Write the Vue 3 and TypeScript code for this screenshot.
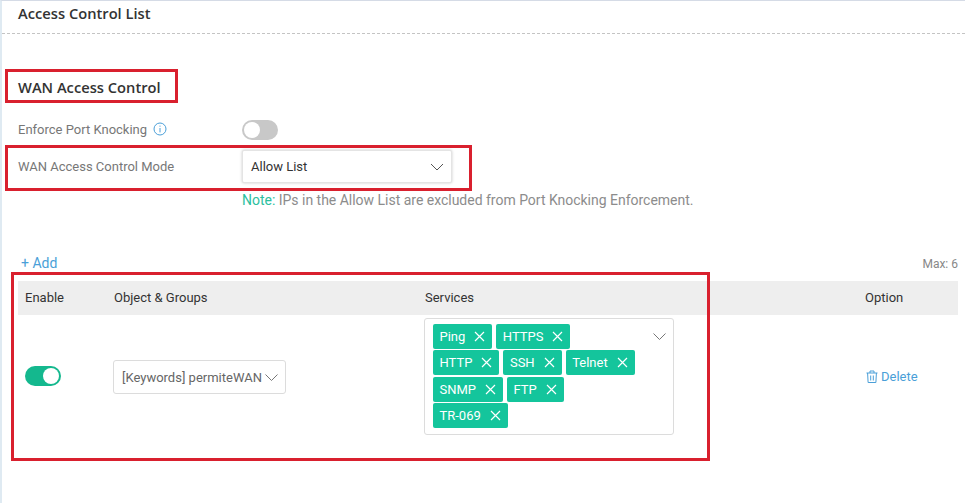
<script setup lang="ts">
interface Tag { name: string }
const rows: Tag[][] = [
  [{ name: 'Ping' }, { name: 'HTTPS' }],
  [{ name: 'HTTP' }, { name: 'SSH' }, { name: 'Telnet' }],
  [{ name: 'SNMP' }, { name: 'FTP' }],
  [{ name: 'TR-069' }],
]
</script>

<template>
  <div class="page">
    <header class="head"><h1>Access Control List</h1></header>
    <h2 class="section">WAN Access Control</h2>
    <div class="form-row first">
      <span class="label">Enforce Port Knocking
        <svg class="info" width="14" height="14" viewBox="0 0 14 14" fill="none" stroke="#4a9fd8">
          <circle cx="7" cy="7" r="6" />
          <path d="M7 6v4.4M7 3.6v1.1" />
        </svg>
      </span>
      <span class="switch off"><i></i></span>
    </div>
    <div class="form-row mode">
      <span class="label">WAN Access Control Mode</span>
      <div class="select">
        <span>Allow List</span>
        <svg width="14" height="8" viewBox="0 0 14 8" fill="none" stroke="#555"><path d="M1 1l6 6 6-6" /></svg>
      </div>
    </div>
    <p class="note"><b>Note:</b> IPs in the Allow List are excluded from Port Knocking Enforcement.</p>
    <div class="tools">
      <a class="add">+ Add</a>
      <span class="max">Max: 6</span>
    </div>
    <div class="table">
      <div class="tr th">
        <div class="c1">Enable</div>
        <div class="c2">Object &amp; Groups</div>
        <div class="c3">Services</div>
        <div class="c4">Option</div>
      </div>
      <div class="tr td">
        <div class="c1"><span class="switch on"><i></i></span></div>
        <div class="c2">
          <div class="obj">
            <span>[Keywords] permiteWAN</span>
            <svg width="13" height="7" viewBox="0 0 13 7" fill="none" stroke="#777"><path d="M.5.5l6 6 6-6" /></svg>
          </div>
        </div>
        <div class="c3">
          <div class="multi">
            <div class="tag-lines">
              <div v-for="(row, i) in rows" :key="i" class="tag-line">
                <span v-for="t in row" :key="t.name" class="tag">
                  {{ t.name }}
                  <svg width="11" height="11" viewBox="0 0 11 11" fill="none" stroke="#fff" stroke-width="1.2"><path d="M1 1l9 9M10 1l-9 9" /></svg>
                </span>
              </div>
            </div>
            <svg class="caret" width="13" height="7" viewBox="0 0 13 7" fill="none" stroke="#777"><path d="M.5.5l6 6 6-6" /></svg>
          </div>
        </div>
        <div class="c4">
          <a class="del">
            <svg width="12" height="13" viewBox="0 0 12 13" fill="none" stroke="#4a9fd8"><path d="M.5 3h11M4 3V1h4v2M1.6 3l.5 9.5h7.8L10.4 3M4.7 5.5v5M7.3 5.5v5" /></svg>
            Delete
          </a>
        </div>
      </div>
    </div>
    <div class="mark m1"></div>
    <div class="mark m2"></div>
    <div class="mark m3"></div>
  </div>
</template>

<style>
html, body { margin: 0; background: #fff; }
</style>

<style scoped>
.page {
  position: relative;
  width: 965px;
  height: 503px;
  box-sizing: border-box;
  padding-left: 16px;
  padding-right: 7px;
  border-top: 1px solid #d5dbe6;
  border-left: 2px solid #dfeaf2;
  background: #fff;
  font-family: Roboto, "Liberation Sans", sans-serif;
  font-size: 13px;
  overflow: hidden;
}
.head {
  height: 32px;
  margin: 0 -7px 0 -16px;
  padding-left: 16px;
  border-bottom: 1px dashed #c4c4c4;
}
h1, h2 {
  margin: 0;
  font-family: "Open Sans", sans-serif;
  font-weight: 600;
  color: #333;
}
h1 { font-size: 14.7px; line-height: 24px; }
.section { font-size: 14.7px; line-height: 20px; margin-top: 43px; }
.form-row { display: flex; align-items: center; }
.form-row.first { height: 24px; margin-top: 21px; }
.form-row.first .label { margin-bottom: 2px; }
.form-row.mode { height: 32px; margin-top: 8px; }
.label { width: 224px; color: #777; display: flex; align-items: center; gap: 6px; }
.info { flex: none; }
.switch {
  display: inline-block;
  box-sizing: border-box;
  width: 36px;
  height: 20px;
  border-radius: 10px;
  padding: 2px;
}
.switch i { display: block; width: 16px; height: 16px; border-radius: 50%; background: #fff; }
.switch.off { background: #c8c8c8; }
.switch.on { background: #14b88e; }
.switch.on i { margin-left: 16px; }
.select {
  box-sizing: border-box;
  width: 210px;
  height: 33px;
  margin-top: 1px;
  padding: 0 7px 0 8px;
  display: flex;
  align-items: center;
  justify-content: space-between;
  background: #fff;
  color: #333;
  border: 1px solid #e4e4e4;
  border-radius: 2px;
  box-shadow: 0 0 3px rgba(0, 0, 0, .22);
}
.note { margin: 10px 0 0 224px; line-height: 17px; font-size: 14px; letter-spacing: -.015px; color: #8c8c8c; }
.note b { font-weight: 400; color: #2dc0a0; }
.tools {
  display: flex;
  justify-content: space-between;
  align-items: center;
  height: 18px;
  margin-top: 45px;
  padding-left: 3px;
}
.add { color: #4a9fd8; font-size: 14px; }
.max { color: #888; font-size: 12px; padding-top: 2px; }
.table { margin-top: 9px; }
.tr { display: flex; }
.th { height: 34px; box-sizing: border-box; padding-bottom: 2px; align-items: center; background: #eeeeee; color: #333; }
.td { height: 122px; align-items: center; }
.c1 { width: 89px; padding-left: 7px; box-sizing: border-box; }
.c2 { width: 311px; padding-left: 7px; box-sizing: border-box; }
.c3 { width: 440px; padding-left: 7px; box-sizing: border-box; }
.c4 { flex: 1; padding-left: 7px; box-sizing: border-box; }
.td .c1 { padding-top: 2px; }
.td .c2 { padding-left: 6px; padding-top: 2px; }
.td .c3 { padding-left: 6px; }
.td .c4 { padding-left: 8px; padding-top: 3px; }
.obj {
  box-sizing: border-box;
  width: 173px;
  height: 34px;
  padding: 0 7px 0 8px;
  display: flex;
  align-items: center;
  justify-content: space-between;
  border: 1px solid #dcdcdc;
  border-radius: 3px;
  color: #666;
  white-space: nowrap;
}
.multi {
  box-sizing: border-box;
  width: 250px;
  height: 117px;
  padding: 5px 7px 0 8px;
  display: flex;
  justify-content: space-between;
  align-items: flex-start;
  border: 1px solid #dcdcdc;
  border-radius: 3px;
}
.tag-lines { display: flex; flex-direction: column; gap: 1.67px; }
.tag-line { display: flex; gap: 4px; }
.tag {
  display: inline-flex;
  align-items: center;
  gap: 9px;
  height: 25px;
  padding: 0 7px 0 6.5px;
  border-radius: 2px;
  background: #14c59c;
  color: #fff;
}
.caret { margin-top: 9px; }
.del { display: inline-flex; align-items: center; gap: 3px; color: #4a9fd8; }
.mark { position: absolute; border: 3px solid #d9202e; box-sizing: border-box; pointer-events: none; }
.m1 { left: 3px; top: 68px; width: 173px; height: 34px; }
.m2 { left: 3px; top: 144px; width: 467px; height: 46px; }
.m3 { left: 9px; top: 271px; width: 699px; height: 189px; }
</style>
